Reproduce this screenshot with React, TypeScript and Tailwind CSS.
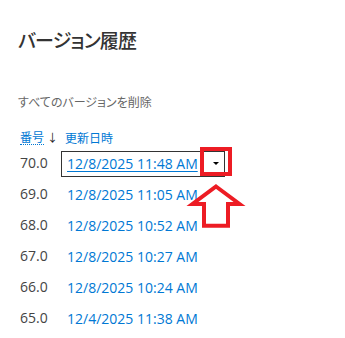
import React from "react";

const rows = [
  { n: "70.0", d: "12/8/2025 11:48 AM" },
  { n: "69.0", d: "12/8/2025 11:05 AM" },
  { n: "68.0", d: "12/8/2025 10:52 AM" },
  { n: "67.0", d: "12/8/2025 10:27 AM" },
  { n: "66.0", d: "12/8/2025 10:24 AM" },
  { n: "65.0", d: "12/4/2025 11:38 AM" },
];

export default function App() {
  return (
    <div className="relative w-[345px] h-[338px] bg-white overflow-hidden font-['Open_Sans','Noto_Sans_CJK_JP',sans-serif]">
      <div className="pl-5 pt-[27px]">
        <h1 className="-ml-[2px] h-[26px] leading-[26px] text-[19px] font-medium tracking-[-0.8px] text-[#333] [font-feature-settings:'palt'] font-['Noto_Sans_CJK_JP',sans-serif]">
          バージョン履歴
        </h1>
        <div className="mt-[40px] h-[18px] leading-[18px] -ml-[2px] text-[12px] text-[#666] [font-feature-settings:'palt'] font-['Noto_Sans_CJK_JP',sans-serif]">
          すべてのバージョンを削除
        </div>
        <div className="mt-[16px] h-[21px] flex items-center text-[12px] text-[#0078d4] font-['Noto_Sans_CJK_JP',sans-serif]">
          <div className="w-[45px] flex items-center">
            <span className="border-b border-dotted border-[#0078d4] leading-[14px]">番号</span>
            <span className="ml-[3px] text-[#222] text-[11px]">↓</span>
          </div>
          <span>更新日時</span>
        </div>
        {rows.map((r, i) => (
          <div key={r.n} className="h-[31px] flex items-center text-[14px]">
            <div className="w-[41px] text-[#444] -mt-[2px]">{r.n}</div>
            {i === 0 ? (
              <div className="w-[164px] h-[26px] border border-[#333] flex items-center pl-[5px]">
                <span className="text-[#0078d4] underline underline-offset-2 whitespace-nowrap">{r.d}</span>
                <span className="ml-auto mr-[5px] w-0 h-0 border-l-[3px] border-r-[3px] border-t-[3px] border-l-transparent border-r-transparent border-t-black"></span>
              </div>
            ) : (
              <span className="pl-[6px] text-[#0078d4] whitespace-nowrap">{r.d}</span>
            )}
          </div>
        ))}
      </div>
      <div className="absolute left-[200px] top-[147px] w-[32px] h-[29px] border-[4px] border-[#ed1c24]"></div>
      <svg className="absolute left-0 top-0" width="345" height="338" viewBox="0 0 345 338">
        <polygon
          points="216,186.5 239.5,204 228,204 228,225.7 204,225.7 204,204 192.5,204"
          fill="none"
          stroke="#ed1c24"
          strokeWidth="4"
          strokeLinejoin="miter"
        />
      </svg>
    </div>
  );
}
